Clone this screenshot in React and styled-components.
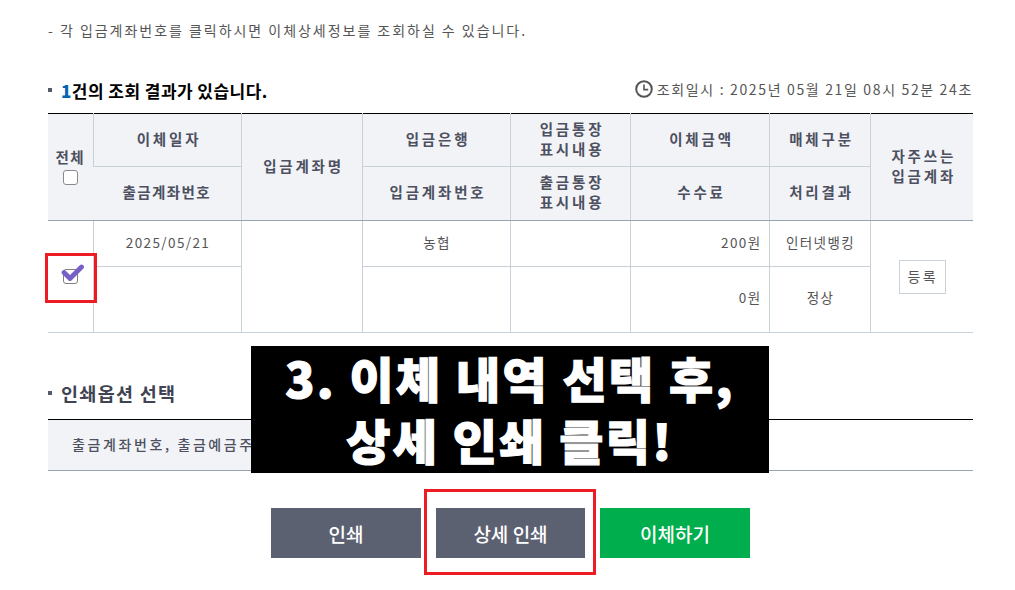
import React from 'react';
import styled, { createGlobalStyle } from 'styled-components';

const GlobalStyle = createGlobalStyle`
	html, body {
		margin: 0;
		padding: 0;
		background: #fff;
	}
	body {
		font-family: "Noto Sans CJK KR", "Liberation Sans", sans-serif;
		color: #3f4352;
	}
`;

const Page = styled.div`
	position: relative;
	width: 1015px;
	height: 590px;
	overflow: hidden;
	box-sizing: border-box;
	padding: 20px 42px 0 48px;
`;
const Notice = styled.p`
	margin: 0;
	height: 20px;
	line-height: 20px;
	font-size: 14px;
	letter-spacing: 1.97px;
	color: #555;
`;
const ResultBar = styled.div`
	display: flex;
	justify-content: space-between;
	align-items: center;
	height: 24px;
	margin: 38px 0 11px;
`;
const SectionTitle = styled.h3`
	display: flex;
	align-items: center;
	margin: 0;
	font-size: ${(p) => p.$size || 17}px;
	font-weight: 700;
	letter-spacing: ${(p) => p.$spacing || 0.45}px;
	color: ${(p) => p.$color || '#000'};
	&::before {
		content: '';
		width: 4px;
		height: 4px;
		margin-right: 9px;
		background: #555b6b;
	}
	b {
		color: #0066b3;
	}
`;
const QueryTime = styled.div`
	display: flex;
	align-items: center;
	gap: 4px;
	padding-bottom: 2px;
	font-size: 14px;
	letter-spacing: 1.65px;
	color: #555;
`;
const Table = styled.table`
	width: 925px;
	table-layout: fixed;
	border-collapse: collapse;
	border-top: 1px solid #000;
	border-bottom: 1px solid #98a2b1;
`;
const Head = styled.th`
	height: ${(p) => p.$h}px;
	padding: 0 0 3px 4px;
	background: #f2f3f7;
	border-left: 1px solid #c8d0d8;
	border-bottom: 1px solid #c8d0d8;
	font-size: 14.5px;
	font-weight: 700;
	line-height: 20px;
	letter-spacing: 2.8px;
	color: #4c5060;
	&:first-child {
		border-left: 0;
		padding-left: 0;
		letter-spacing: 1.4px;
	}
`;
const HeadRow = styled.tr`
	&:last-child th,
	th[rowspan='2'] {
		border-bottom: 1px solid #98a2b1;
	}
`;
const Cell = styled.td`
	height: ${(p) => p.$h}px;
	padding: ${(p) => (p.$right ? '0 7px' : '0 0')} ${(p) => p.$lift || 3}px ${(p) => (p.$right ? '0' : '2px')};
	border-left: 1px solid #c8d0d8;
	border-bottom: 1px solid #c8d0d8;
	text-align: ${(p) => (p.$right ? 'right' : 'center')};
	font-size: 13.5px;
	letter-spacing: 1.4px;
	color: #555;
`;
const CheckCell = styled(Cell)`
	border-left: 0;
	padding: 0;
`;
const CheckBox = styled.span`
	display: block;
	width: 15px;
	height: 15px;
	margin: 3px auto 0;
	box-sizing: border-box;
	border: 1.5px solid #8a8a8a;
	border-radius: 3px;
	background: #fff;
`;
const CheckedMark = styled.span`
	position: relative;
	display: block;
	width: 15px;
	height: 15px;
	margin: 0 auto;
	box-sizing: border-box;
	border: 1.5px solid #808080;
	border-radius: 3px;
	svg {
		position: absolute;
		left: -3px;
		top: -7px;
	}
`;
const RegisterCell = styled(Cell)`
	padding: 0 0 0 2px;
`;
const RegisterButton = styled.span`
	display: inline-block;
	width: 47px;
	height: 34px;
	box-sizing: border-box;
	border: 1px solid #ccd2d9;
	line-height: 30px;
	font-size: 14px;
	letter-spacing: 2.4px;
	color: #555;
`;
const OptionTitleBar = styled.div`
	height: 24px;
	margin: 48px 0 14px;
	display: flex;
	align-items: center;
`;
const OptionBox = styled.div`
	height: 50px;
	padding-left: 24px;
	background: linear-gradient(to right, #f2f3f7 300px, #fff 300px);
	border-top: 1px solid #000;
	border-bottom: 1px solid #98a2b1;
	line-height: 48px;
	font-size: 14px;
	font-weight: 500;
	letter-spacing: 2.6px;
	color: #4c5060;
	white-space: nowrap;
`;
const Actions = styled.div`
	display: flex;
	justify-content: center;
	gap: 15px;
	margin: 37px 0 0;
`;
const ActionButton = styled.button`
	width: ${(p) => p.$w || 150}px;
	height: 50px;
	border: 0;
	padding: 0;
	background: ${(p) => (p.$green ? '#00ae4d' : '#5c6172')};
	color: #fff;
	font-family: inherit;
	font-size: 19px;
	font-weight: 500;
`;
const Banner = styled.div`
	position: absolute;
	left: 251px;
	top: 346px;
	width: 518px;
	height: 127px;
	background: #000;
	color: #fff;
	text-align: center;
	font-size: 48px;
	font-weight: 900;
	line-height: 62px;
	letter-spacing: 2.4px;
	box-sizing: border-box;
	-webkit-text-stroke: 1.2px #fff;
`;
const RedFrame = styled.div`
	position: absolute;
	left: ${(p) => p.$x}px;
	top: ${(p) => p.$y}px;
	width: ${(p) => p.$w}px;
	height: ${(p) => p.$h}px;
	box-sizing: border-box;
	border: 3px solid #ed1c24;
`;

function ClockIcon() {
	return (
		<svg width="18" height="18" viewBox="0 0 18 18" fill="none">
			<circle cx="9" cy="9" r="7.8" stroke="#555" strokeWidth="2" />
			<path d="M9 4.5V9.6H13.2" stroke="#555" strokeWidth="1.6" />
		</svg>
	);
}

function App() {
	return (
		<Page>
			<GlobalStyle />
			<Notice>- 각 입금계좌번호를 클릭하시면 이체상세정보를 조회하실 수 있습니다.</Notice>
			<ResultBar>
				<SectionTitle>
					<b>1</b>건의 조회 결과가 있습니다.
				</SectionTitle>
				<QueryTime>
					<ClockIcon />
					조회일시 : 2025년 05월 21일 08시 52분 24초
				</QueryTime>
			</ResultBar>
			<Table>
				<colgroup>
					<col width="45" />
					<col width="148" />
					<col width="121" />
					<col width="148" />
					<col width="120" />
					<col width="139" />
					<col width="101" />
					<col width="103" />
				</colgroup>
				<thead>
					<HeadRow>
						<Head rowSpan="2">
							전체
							<CheckBox />
						</Head>
						<Head $h={49}>이체일자</Head>
						<Head rowSpan="2">입금계좌명</Head>
						<Head>입금은행</Head>
						<Head>
							입금통장
							<br />
							표시내용
						</Head>
						<Head>이체금액</Head>
						<Head>매체구분</Head>
						<Head rowSpan="2">
							자주쓰는
							<br />
							입금계좌
						</Head>
					</HeadRow>
					<HeadRow>
						<Head $h={50}>출금계좌번호</Head>
						<Head>입금계좌번호</Head>
						<Head>
							출금통장
							<br />
							표시내용
						</Head>
						<Head>수수료</Head>
						<Head>처리결과</Head>
					</HeadRow>
				</thead>
				<tbody>
					<tr>
						<CheckCell rowSpan="2">
							<CheckedMark>
								<svg width="24" height="20" viewBox="0 0 24 20" fill="none">
									<path d="M3 9.5L9 15.5L20.5 4" stroke="#7660c8" strokeWidth="4.8" strokeLinecap="round" strokeLinejoin="round" />
								</svg>
							</CheckedMark>
						</CheckCell>
						<Cell $h={42}>2025/05/21</Cell>
						<Cell rowSpan="2" />
						<Cell>농협</Cell>
						<Cell />
						<Cell $right>200원</Cell>
						<Cell>인터넷뱅킹</Cell>
						<RegisterCell rowSpan="2">
							<RegisterButton>등록</RegisterButton>
						</RegisterCell>
					</tr>
					<tr>
						<Cell $h={59} $lift={6} />
						<Cell $lift={6} />
						<Cell $lift={6} />
						<Cell $right $lift={6}>0원</Cell>
						<Cell $lift={6}>정상</Cell>
					</tr>
				</tbody>
			</Table>
			<OptionTitleBar>
				<SectionTitle $size={18.5} $spacing={1.3} $color="#3f4352">인쇄옵션 선택</SectionTitle>
			</OptionTitleBar>
			<OptionBox>출금계좌번호, 출금예금주</OptionBox>
			<Actions>
				<ActionButton>인쇄</ActionButton>
				<ActionButton $w={149}>상세 인쇄</ActionButton>
				<ActionButton $green>이체하기</ActionButton>
			</Actions>
			<Banner>
				3. 이체 내역 선택 후,
				<br />
				상세 인쇄 클릭!
			</Banner>
			<RedFrame $x={45} $y={253} $w={52} $h={50} />
			<RedFrame $x={424} $y={489} $w={172} $h={86} />
		</Page>
	);
}

export default App;
